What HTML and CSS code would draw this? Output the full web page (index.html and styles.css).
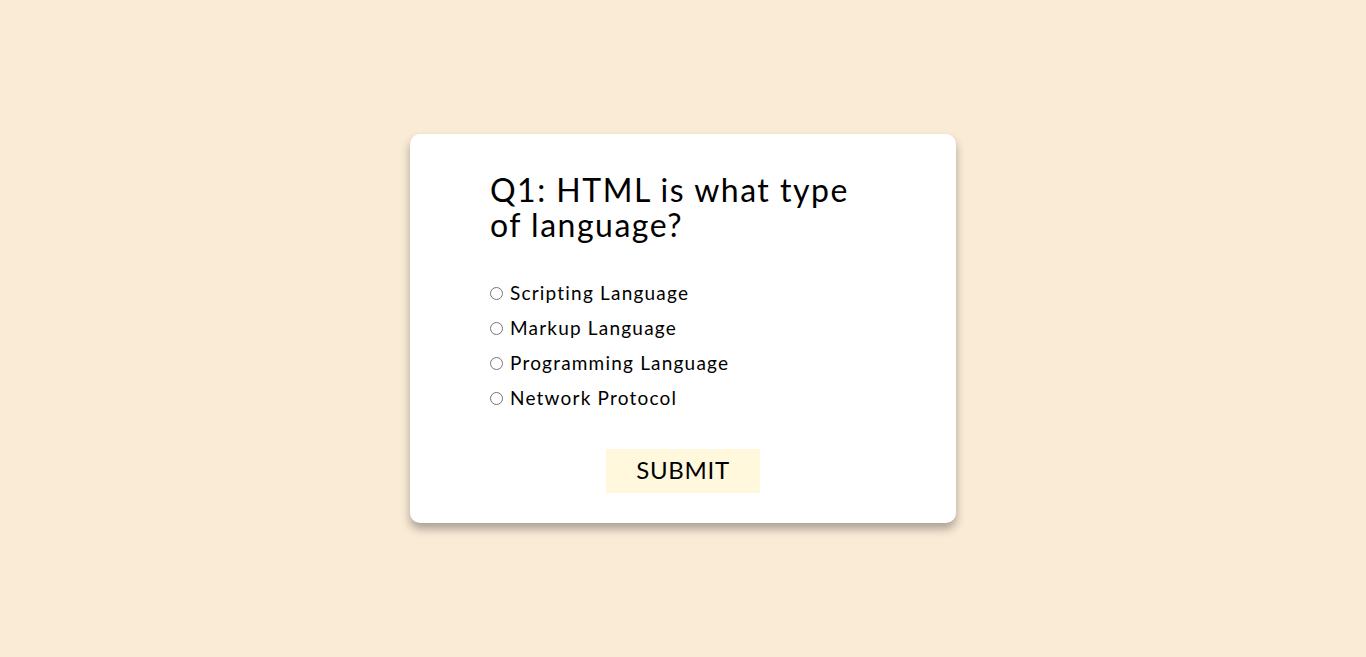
FILE: index.html
```html
<!DOCTYPE html>
<html lang="en">
<head>
<meta charset="utf-8">
<title>Quiz</title>
<link rel="stylesheet" href="styles.css">
</head>
<body>
<main class="quiz">
  <h2 class="question">Q1: HTML is what type of language?</h2>
  <ul class="options">
    <li class="option"><input type="radio" name="answer" id="a"><label for="a">Scripting Language</label></li>
    <li class="option"><input type="radio" name="answer" id="b"><label for="b">Markup Language</label></li>
    <li class="option"><input type="radio" name="answer" id="c"><label for="c">Programming Language</label></li>
    <li class="option"><input type="radio" name="answer" id="d"><label for="d">Network Protocol</label></li>
  </ul>
  <button class="submit" type="button">SUBMIT</button>
</main>
</body>
</html>
```
FILE: styles.css
```css
* { box-sizing: border-box; }
html, body { margin: 0; height: 100%; }
body {
  background: #faebd7;
  font-family: Lato, "Open Sans", sans-serif;
  display: flex;
  align-items: center;
  justify-content: center;
}
.quiz {
  width: 546px;
  height: 389px;
  background: #fff;
  border-radius: 10px;
  box-shadow: 0 6px 10px rgba(0,0,0,0.32);
  padding: 38px 80px 30px;
  display: flex;
  flex-direction: column;
}
.question {
  margin: 0;
  font-size: 32px;
  font-weight: 400;
  line-height: 35px;
  letter-spacing: 1.5px;
  color: #000;
  max-width: 375px;
}
.options {
  list-style: none;
  margin: 40px 0 0;
  padding: 0;
  display: flex;
  flex-direction: column;
  gap: 13px;
}
.option {
  display: flex;
  align-items: center;
  font-size: 19px;
  line-height: 22px;
  letter-spacing: 1.2px;
}
.option input {
  margin: 0 7px 0 0;
  width: 13px;
  height: 13px;
}
.submit {
  align-self: center;
  margin-top: auto;
  width: 154px;
  height: 44px;
  border: none;
  background: #fff8dc;
  font-family: inherit;
  font-size: 24px;
  letter-spacing: 0.7px;
  color: #000;
  padding: 0 0 3px;
}
```
